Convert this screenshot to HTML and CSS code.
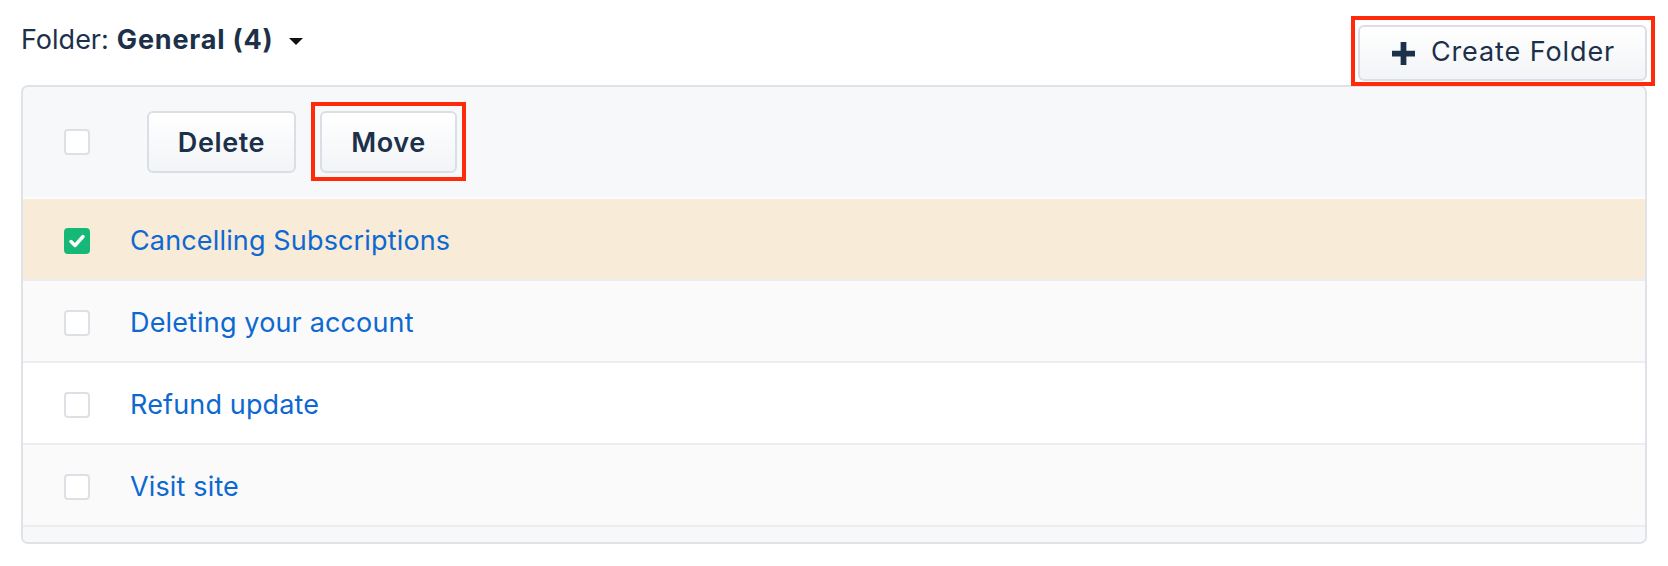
FILE: index.html
```html
<!DOCTYPE html>
<html>
<head>
<meta charset="utf-8">
<link rel="stylesheet" href="styles.css">
</head>
<body>
<div class="page">
  <div class="topbar">
    <div class="folder">Folder: <strong>General (4)</strong><span class="caret"></span></div>
    <div class="hl-wrap hl-create">
      <button class="btn btn-create">
        <svg class="plus" viewBox="0 0 24 24" width="23" height="23"><path d="M9 0h6v9h9v6h-9v9H9v-9H0V9h9z" fill="#1b3149"/></svg>
        <span>Create Folder</span>
      </button>
    </div>
  </div>
  <div class="card">
    <div class="card-head">
      <span class="cb"></span>
      <div class="actions">
        <button class="btn btn-bold btn-delete">Delete</button>
        <div class="hl-wrap hl-move">
          <button class="btn btn-bold btn-move">Move</button>
        </div>
      </div>
    </div>
    <div class="row row-selected">
      <span class="cb cb-checked"><svg viewBox="0 0 26 26" width="26" height="26"><path d="M7 13.5l4 4 8-9" fill="none" stroke="#fff" stroke-width="3.4" stroke-linecap="round" stroke-linejoin="round"/></svg></span>
      <a class="link" href="#">Cancelling Subscriptions</a>
    </div>
    <div class="row row-alt">
      <span class="cb"></span>
      <a class="link" href="#">Deleting your account</a>
    </div>
    <div class="row">
      <span class="cb"></span>
      <a class="link" href="#">Refund update</a>
    </div>
    <div class="row row-alt">
      <span class="cb"></span>
      <a class="link" href="#">Visit site</a>
    </div>
    <div class="card-foot"></div>
  </div>
</div>
</body>
</html>
```

FILE: styles.css
```css
* { box-sizing: border-box; }
html, body { margin: 0; padding: 0; background: #fff; }
body {
  font-family: Inter, "Noto Sans", "Liberation Sans", sans-serif;
  color: #1c3049;
}
.page { padding: 0 21px; }
.topbar {
  display: flex;
  justify-content: space-between;
  align-items: flex-start;
  height: 85px;
}
.folder {
  margin-top: 24px;
  font-size: 27px;
  line-height: 32px;
  display: flex;
  align-items: center;
}
.folder strong { font-weight: 700; margin-left: 8px; letter-spacing: 0.8px; }
.caret {
  display: inline-block;
  width: 0; height: 0;
  border-left: 7px solid transparent;
  border-right: 7px solid transparent;
  border-top: 7px solid #111;
  margin-left: 15px;
  margin-top: 2px;
}
.hl-wrap { position: relative; }
.hl-wrap::after {
  content: "";
  position: absolute;
  border: 4px solid #ff2a0a;
  pointer-events: none;
}
.hl-create { margin-top: 25px; }
.hl-create::after { left: -7px; right: -8px; top: -9px; bottom: -5px; }
.hl-move::after { left: -9px; right: -9px; top: -9px; bottom: -8px; }

.btn {
  font-family: inherit;
  color: #1c3049;
  background: linear-gradient(#ffffff, #f2f4f7);
  border: 2px solid #dadfe5;
  border-radius: 6px;
  display: flex;
  align-items: center;
  justify-content: center;
  padding: 0;
  cursor: pointer;
}
.btn-create {
  width: 289px;
  height: 56px;
  font-size: 27px;
  gap: 16px;
  letter-spacing: 0.9px;
  padding-left: 2px;
  padding-bottom: 3px;
}
.btn-create .plus { margin-top: 3px; }
.btn-bold { font-size: 27px; font-weight: 600; height: 62px; letter-spacing: 0.6px; }
.btn-delete { width: 149px; }
.btn-move { width: 137px; }

.card {
  border: 2px solid #dfe3e8;
  border-radius: 7px;
  background: #f7f8fa;
  overflow: hidden;
}
.card-head {
  height: 112px;
  display: flex;
  align-items: center;
  padding-left: 41px;
  border-bottom: 2px solid #fcfcfd;
}
.actions {
  display: flex;
  gap: 24px;
  margin-left: 57px;
}
.cb {
  width: 26px;
  height: 26px;
  flex: none;
  border: 2px solid #dde1e6;
  border-radius: 4px;
  background: #fff;
  display: block;
}
.cb-checked {
  background: #16b877;
  border-color: #16b877;
  position: relative;
}
.cb-checked svg { position: absolute; left: -2px; top: -2px; }
.row {
  height: 82px;
  display: flex;
  align-items: center;
  padding-left: 41px;
  background: #fff;
  border-bottom: 2px solid #ebedef;
  padding-top: 3px;
}
.row-alt { background: #fafafa; }
.row-selected { background: #f8ebd8; }
.link {
  margin-left: 40px;
  color: #0d68d0;
  text-decoration: none;
  font-size: 27px;
  letter-spacing: 0.15px;
}
.card-foot { height: 15px; background: #f7f8fa; }
```
